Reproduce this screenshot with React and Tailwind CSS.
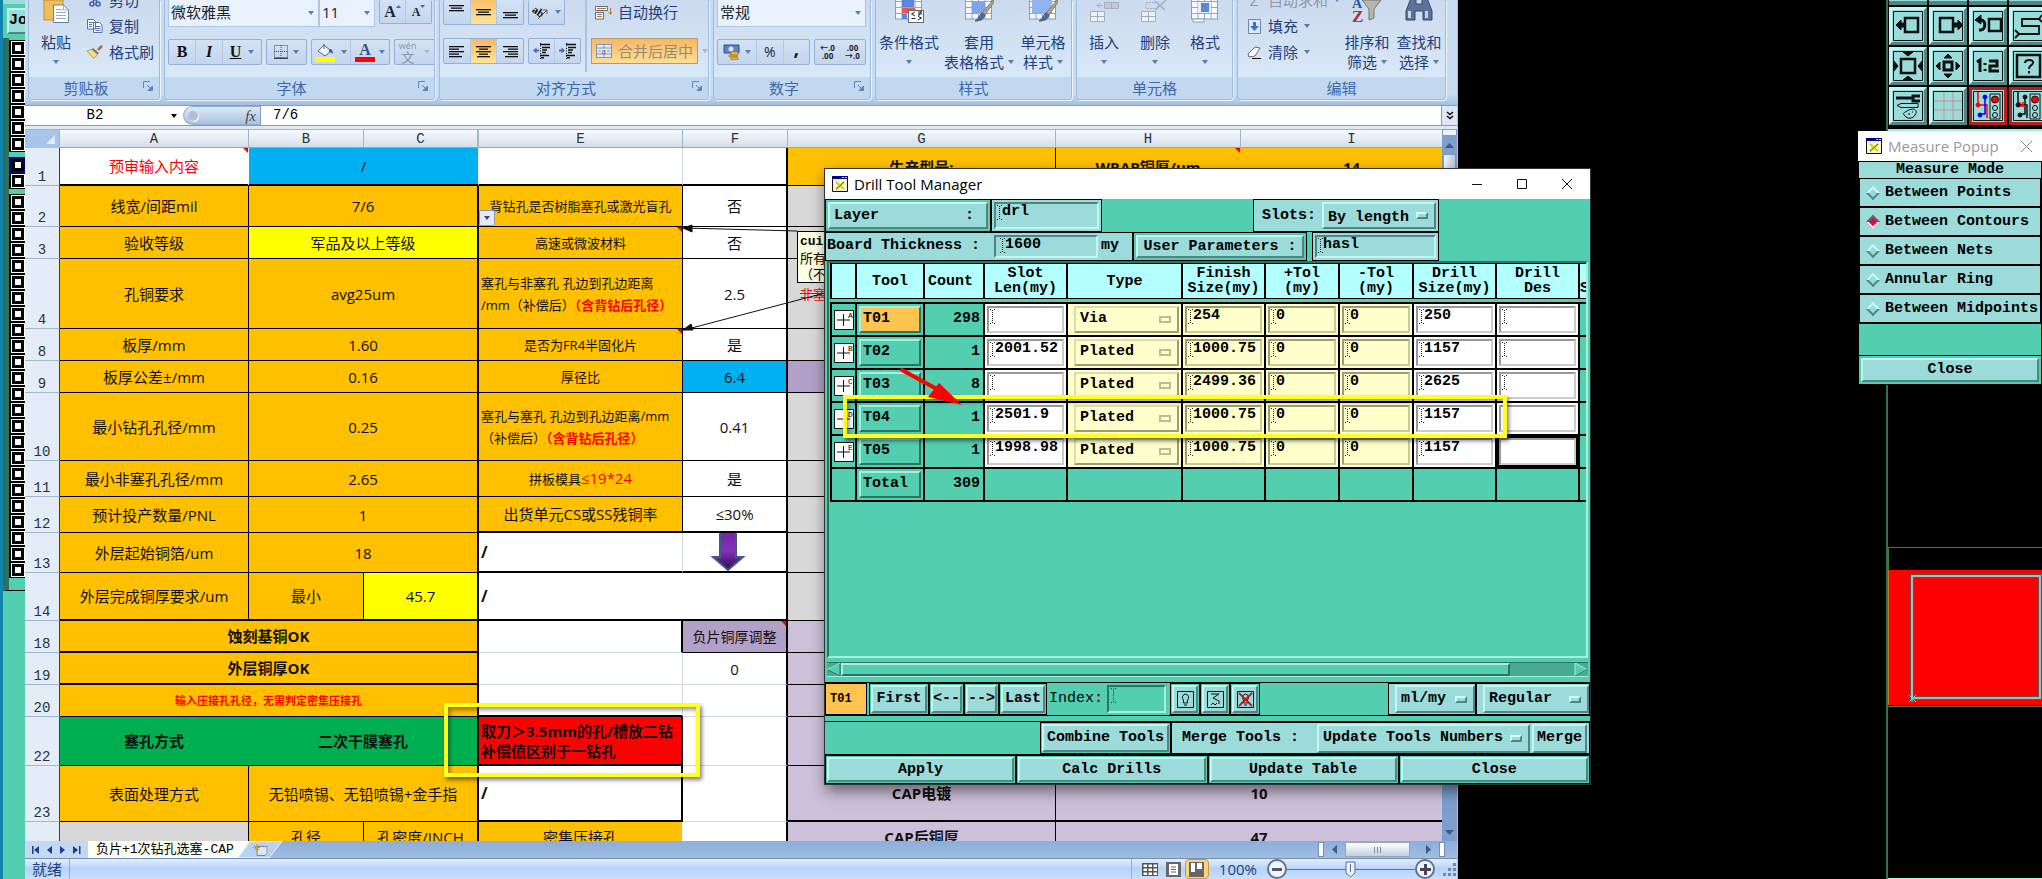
import React, { useState } from "react";

const UI_FONT = "font-['Open_Sans','Noto_Sans_CJK_SC',sans-serif]";
const MONO_FONT = "font-['Liberation_Mono','Noto_Sans_CJK_SC',monospace]";

const raised = "border-2 border-t-[#c4f7f1] border-l-[#c4f7f1] border-r-[#4f8584] border-b-[#4f8584] bg-[#9bdbda]";
const raisedGreen = "border-2 border-t-[#a5efdc] border-l-[#a5efdc] border-r-[#2d7462] border-b-[#2d7462]";
const sunken = "border-2 border-t-[#4f8584] border-l-[#4f8584] border-r-[#c4f7f1] border-b-[#c4f7f1] bg-[#9bdbda]";

/* ---------- spreadsheet ribbon ---------- */

function Caret({ className = "text-[#5b7cae]" }) {
  return (
    <svg width="6" height="4" viewBox="0 0 6 4" className={className} aria-hidden="true">
      <path d="M0 0h6L3 4z" fill="currentColor" />
    </svg>
  );
}

function Group({ title, width, launcher, children }) {
  return (
    <section className={`flex h-[100px] flex-none flex-col overflow-hidden rounded-b border border-t-0 border-[#9dbbdd] shadow-[1px_1px_0_#eef6fd] ${width}`}>
      <div className="flex h-[77px] flex-none overflow-hidden bg-linear-to-b from-[#cbdaee] to-[#d9e8f6]">{children}</div>
      <div className="flex h-[23px] items-center bg-[#c1d8f0] text-[15px] text-[#3c68a8]">
        <span className="flex-1 text-center">{title}</span>
        {launcher && (
          <button aria-label={title} className="mr-1.5 mb-1">
            <svg width="10" height="10" viewBox="0 0 10 10" fill="none" stroke="#6484b4">
              <path d="M.5 7V.5H7M4 4l4 4" />
              <path d="M9.500 5v4.500H5z" fill="#6484b4" />
            </svg>
          </button>
        )}
      </div>
    </section>
  );
}

const box = "flex items-center rounded-[2px] border border-[#92b0d8] bg-linear-to-b from-[#d3e2f4] to-[#c3d6ee]";
const seg = "flex h-full items-center justify-center border-r border-[#b3c8e4] last:border-r-0";

function Combo({ value, width, label }) {
  return (
    <div className={`relative h-[27px] border border-t-0 border-[#abc6e8] bg-[#e9f2fc] ${width}`}>
      <select aria-label={label} className="h-full w-full appearance-none bg-transparent pr-4 pb-1 pl-0.5 text-[15px] text-[#1b2230] outline-none">
        <option>{value}</option>
      </select>
      <span className="pointer-events-none absolute top-[11px] right-1 flex"><Caret /></span>
    </div>
  );
}

function Lines({ rows, top = 0 }) {
  return (
    <svg width="15" height="17" viewBox="0 0 15 17" aria-hidden="true">
      {rows.map(([x, w], i) => (
        <rect key={i} x={x} y={top + i * 2.500} width={w} height="1.300" fill="#111" />
      ))}
    </svg>
  );
}

function IndentIcon({ flip }) {
  return (
    <svg width="17" height="16" viewBox="0 0 17 16" aria-hidden="true">
      <path d="M7 1.500h10M9 4.500h8M9 7h5M9 9.500h4M7 12.500h9M8 14.800h3" stroke="#111" strokeWidth="1.400" />
      <path d="M7.500 0v16" stroke="#111" strokeDasharray="1 1.500" />
      <path d={flip ? "M6 7.500L2.500 4.500v2H0v2h2.500v2z" : "M0 7.500L3.500 4.500v2H6v2H3.500v2z"} fill="#3f6cc4" />
    </svg>
  );
}

function BigButton({ icon, lines, width }) {
  return (
    <button className={`flex flex-none flex-col items-center text-[15px] leading-5 whitespace-nowrap text-[#1e3f80] ${width}`}>
      <span className="flex h-6 flex-none items-start justify-center">{icon}</span>
      <span className="mt-2">{lines[0]}</span>
      <span className="flex h-5 items-center gap-1">
        {lines[1]}
        <Caret />
      </span>
    </button>
  );
}

function SmallButton({ icon, text, muted, caret }) {
  return (
    <button className={`flex h-[26px] flex-none items-center gap-1.5 text-[15px] whitespace-nowrap ${muted ? "text-[#8f99a8]" : "text-[#1e3f80]"}`}>
      <span className="flex w-4 justify-center">{icon}</span>
      {text}
      {caret && <Caret />}
    </button>
  );
}

function GridIcon({ kind }) {
  return (
    <svg width="30" height="24" viewBox="0 0 30 24" aria-hidden="true">
      <rect x="1.500" y="-6" width="26" height="25" fill="#f6f9fd" stroke="#8a9cb8" />
      <path d="M1 1.500h26M1 7.500h26M1 13.500h26M8 0v19M14.500 0v19M21 0v19" stroke="#8fa6cc" />
      {kind === "cond" && (
        <>
          <path d="M8 -2h12v9H8z" fill="#5b86dc" />
          <path d="M8 8h13v5H8z" fill="#ee5544" />
          <path d="M8 14h5v5H8z" fill="#5b86dc" />
          <rect x="14.500" y="10.500" width="15" height="12" fill="#fff" stroke="#666" />
          <path d="M21 12l-3.500 2 3.500 2M17.500 18.500h4M24 12h4M24 14h4M27.500 11l-3 5M24 16.500l3.500 1.500-3.500 2" fill="none" stroke="#222" />
        </>
      )}
      {kind === "table" && <path d="M8 2h13v11H8z" fill="#7fa3e6" />}
      {kind === "style" && <path d="M4 -3h20v16H4z" fill="#8fb2f0" />}
      {kind === "format" && (
        <>
          <path d="M8 2h13v11H8z" fill="#e4ecf8" />
          <path d="M11 3h8v9h-8z" fill="#5d86da" />
          <path d="M3 19h11v3H3z" fill="#fff" stroke="#8a9cb8" />
        </>
      )}
      {(kind === "table" || kind === "style") && (
        <>
          <path d="M29 0l1 2-9 13-3-2z" fill="#b3a48e" stroke="#6f6454" strokeWidth=".7" />
          <path d="M18 13l3 2c-1 4-4 6-10 6 4-2 4-6 7-8z" fill="#3b6db8" stroke="#6b4528" strokeWidth=".8" />
        </>
      )}
    </svg>
  );
}

function InsertIcon({ remove }) {
  return (
    <svg width="30" height="24" viewBox="0 0 30 24" fill="#eef2f8" stroke="#a3aebf" aria-hidden="true">
      <path d="M1.500 11.500h14v10h-14zM1.500 16.500h14M8.500 11.500v10" />
      {remove ? (
        <>
          <path d="M6 2.500h12v6H6z" strokeDasharray="2 1" fill="none" />
          <path d="M15 1l10 9M26 0L15 10" strokeWidth="1.500" />
        </>
      ) : (
        <path d="M15.500 2.500h14v6h-14zM22.500 2.500v6M14 5.500H8M10.500 3L8 5.500 10.500 8" fill="#c2cad6" />
      )}
    </svg>
  );
}

function Ribbon() {
  return (
    <div className="flex h-[106px] flex-none gap-1 border-b border-[#7d9cc6] bg-linear-to-b from-[#c7dbf3] from-90% to-[#a3bfe2] pr-3 pl-[3px]">
      <Group title="剪贴板" launcher width="w-[132px]">
        <button className="flex w-[54px] flex-none flex-col items-center text-[15px] leading-5 text-[#1e3f80]">
          <svg width="28" height="24" viewBox="0 0 28 24" aria-hidden="true">
            <path d="M2 0h19v20H2z" fill="#f0bd5e" stroke="#c48f35" />
            <path d="M11.500 5h10l5 5v12.500h-15z" fill="#fff" stroke="#6b7f9e" />
            <path d="M21.500 5v5h5M14 9.500h6M14 12.500h10M14 15.500h10M14 18.500h10" fill="none" stroke="#9aa9c0" />
          </svg>
          <span className="mt-2">粘贴</span>
          <span className="flex h-5 items-center"><Caret /></span>
        </button>
        <div className="ml-1 flex h-[65px] flex-col justify-end">
          <SmallButton
            text="剪切"
            icon={
              <svg width="12" height="14" viewBox="0 0 12 14" fill="none" stroke="#3c64a8" strokeWidth="1.600">
                <path d="M3 0l5 9M8 0L4 9" />
                <circle cx="3" cy="11" r="2" />
                <circle cx="9" cy="11" r="2" />
              </svg>
            }
          />
          <SmallButton
            text="复制"
            icon={
              <svg width="16" height="14" viewBox="0 0 16 14" fill="#fff" stroke="#5473ac">
                <path d="M.5.500h6l2 2V10h-8zM6.500 3.500h6l2.500 2.500v7.500H6.500z" />
                <path d="M2 3.500h4M2 5.500h3M2 7.500h3M8.500 7.500h5M8.500 9.500h5M8.500 11.500h5" />
              </svg>
            }
          />
          <SmallButton
            text="格式刷"
            icon={
              <svg width="16" height="14" viewBox="0 0 16 14">
                <path d="M10 4l4-4 2 1.500-4 4.500z" fill="#a67542" />
                <path d="M6 3l6 5-1.500 1.500-6-5z" fill="#6b7484" />
                <path d="M4.500 4.500l6 5L7 13.500 0 6z" fill="#f4dd8a" stroke="#a98d3a" strokeWidth=".8" />
              </svg>
            }
          />
        </div>
      </Group>

      <Group title="字体" launcher width="w-[271px]">
        <div className="ml-[3px] flex flex-col">
          <div className="flex">
            <Combo label="字体" value="微软雅黑" width="w-[151px]" />
            <Combo label="字号" value="11" width="w-[56px]" />
            <div className={`ml-1 h-6 w-[53px] border-t-0 ${box} font-['Liberation_Serif',serif] font-bold text-[#1d2735]`}>
              <button aria-label="增大字号" className={`${seg} flex-1 text-base leading-5`}>A<span className="mb-2.5"><svg width="5" height="3"><path d="M0 3h5L2.500 0z" fill="#3f6cc4" /></svg></span></button>
              <button aria-label="减小字号" className={`${seg} flex-1 text-xs leading-5`}>A<span className="mb-2.5"><svg width="5" height="3"><path d="M0 0h5L2.500 3z" fill="#3f6cc4" /></svg></span></button>
            </div>
          </div>
          <div className="mt-3 flex h-[26px] gap-1">
            <div className={`w-[94px] ${box} font-['Liberation_Serif',serif] text-base font-bold text-[#111]`}>
              <button className={`${seg} w-[27px]`}>B</button>
              <button className={`${seg} w-[27px] italic`}>I</button>
              <button className={`${seg} w-[25px] border-r-0 underline`}>U</button>
              <Caret />
            </div>
            <div className={`w-[41px] justify-around px-1 ${box}`}>
              <button aria-label="边框">
                <svg width="14" height="14" viewBox="0 0 14 14" stroke="#445" fill="none">
                  <path d="M.5.500h13v12H.5zM7 0v13M0 6.500h14" strokeDasharray="1 1" />
                  <path d="M0 13.500h14" strokeWidth="1.500" />
                </svg>
              </button>
              <Caret />
            </div>
            <div className={`w-[79px] ${box}`}>
              <button aria-label="填充颜色" className={`${seg} flex-1 gap-1.5`}>
                <svg width="20" height="19" viewBox="0 0 20 19">
                  <path d="M9 2l7 6-6 5-7-5z" fill="#f2f5fa" stroke="#55637c" />
                  <path d="M9 6V1" stroke="#55637c" />
                  <path d="M14 6c3 0 4 2 4 5-1-1-2-2-4-2z" fill="#3159a8" />
                  <rect y="14" width="20" height="5" fill="#ff0" />
                </svg>
                <Caret />
              </button>
              <button aria-label="字体颜色" className={`${seg} flex-1 gap-1`}>
                <span className="w-5 border-b-[5px] border-[#f00] font-['Liberation_Serif',serif] text-base leading-[15px] font-bold text-[#33508a]">A</span>
                <Caret />
              </button>
            </div>
            <div className={`w-[41px] justify-around ${box}`}>
              <button className="flex flex-col items-center text-[9px] leading-[9px] text-[#8b95a5]">
                <span>wén</span>
                <span className="text-[13px] leading-[14px]">文</span>
              </button>
              <Caret className="text-[#a9b6ca]" />
            </div>
          </div>
        </div>
      </Group>

      <Group title="对齐方式" launcher width="w-[270px]">
        <div className="ml-[3px] flex flex-col">
          <div className="flex h-[25px] gap-1">
            <div className={`w-[81px] border-t-0 ${box}`}>
              <button aria-label="顶端对齐" className={`${seg} flex-1`}><Lines top={1} rows={[[0, 15], [2, 11], [0, 15]]} /></button>
              <button aria-label="垂直居中" className={`${seg} flex-1 bg-linear-to-b from-[#fbc06c] to-[#fee595]`}><Lines top={5} rows={[[0, 15], [2, 11], [0, 15]]} /></button>
              <button aria-label="底端对齐" className={`${seg} flex-1`}><Lines top={8} rows={[[0, 15], [2, 11], [0, 15]]} /></button>
            </div>
            <div className={`w-[37px] justify-around border-t-0 ${box}`}>
              <button aria-label="方向">
                <svg width="17" height="16" viewBox="0 0 17 16">
                  <text x="0" y="10" transform="rotate(35 4 8)" fontSize="11" fontWeight="bold" fontFamily="Liberation Serif">ab</text>
                  <path d="M6 15l9-9M11 6h4v4" fill="none" stroke="#555" />
                </svg>
              </button>
              <Caret />
            </div>
          </div>
          <div className="mt-[13px] flex h-[26px] gap-1">
            <div className={`w-[81px] ${box}`}>
              <button aria-label="左对齐" className={`${seg} flex-1`}><Lines top={3} rows={[[0, 15], [0, 10], [0, 15], [0, 10], [0, 13]]} /></button>
              <button aria-label="居中" className={`${seg} flex-1 bg-linear-to-b from-[#fbb85e] to-[#fee595]`}><Lines top={3} rows={[[0, 15], [3, 9], [0, 15], [3, 9], [1, 13]]} /></button>
              <button aria-label="右对齐" className={`${seg} flex-1`}><Lines top={3} rows={[[0, 15], [5, 10], [0, 15], [5, 10], [2, 13]]} /></button>
            </div>
            <div className={`w-[53px] ${box}`}>
              <button aria-label="减少缩进" className={`${seg} flex-1`}><IndentIcon /></button>
              <button aria-label="增加缩进" className={`${seg} flex-1`}><IndentIcon flip /></button>
            </div>
          </div>
        </div>
        <div className="mx-1 h-[72px] w-0.5 flex-none bg-[#a9c2e2]" />
        <div className="flex flex-col text-[15px] whitespace-nowrap">
          <button className="flex h-[25px] items-center gap-1.5 px-1 text-[#1e3f80]">
            <svg width="17" height="16" viewBox="0 0 17 16" fill="#fff" stroke="#667">
              <path d="M.5 1.500h12v4H.5zM.5 7.500h8v6.500H.5z" />
              <path d="M2 3.500h9M2 9.500h5M2 11.500h5M15.500 3v6M13 6.500l2.500 3 1.500-3" stroke="#b0763a" />
            </svg>
            自动换行
          </button>
          <div className="mt-[13px] flex items-center gap-1">
            <button className="flex h-[26px] items-center gap-1.5 border border-[#b39a6b] bg-linear-to-b from-[#f7b767] to-[#fddf93] px-1 text-[#9a8a70]">
              <svg width="16" height="14" viewBox="0 0 16 14" fill="#e3ebf6" stroke="#8194b4">
                <path d="M.5.500h15v13H.5zM.5 4h15M.5 10h15M8 .500V4M8 10v3.500M2 7h3M11 7h3" />
                <text x="5.500" y="9.500" fontSize="8" stroke="none" fill="#456">a</text>
              </svg>
              合并后居中
            </button>
            <Caret className="text-[#a9b6ca]" />
          </div>
        </div>
      </Group>

      <Group title="数字" launcher width="w-[158px]">
        <div className="ml-[3px] flex flex-col">
          <Combo label="数字格式" value="常规" width="w-[149px]" />
          <div className="mt-3 flex h-[26px] gap-1 font-bold text-[#222]">
            <div className={`w-[93px] ${box}`}>
              <button aria-label="货币" className={`${seg} w-[39px] gap-1`}>
                <svg width="18" height="16" viewBox="0 0 18 16">
                  <path d="M1 1h15v8H1z" fill="#5f82c4" stroke="#2f4f92" />
                  <circle cx="8" cy="5" r="2.500" fill="#dbe6f6" />
                  <path d="M8 8h7v3H8zM6 11h8v2H6zM8 13h7v2.500H8z" fill="#f0c040" stroke="#a07818" strokeWidth=".7" />
                </svg>
                <Caret />
              </button>
              <button className={`${seg} flex-1 text-sm font-normal`}>%</button>
              <button className={`${seg} flex-1 pb-2 text-xl`}>,</button>
            </div>
            <div className={`w-[52px] text-[8px] leading-[8px] ${box}`}>
              <button className="flex-1">←.0<br />.00</button>
              <button className="flex-1">.00<br />→.0</button>
            </div>
          </div>
        </div>
      </Group>

      <Group title="样式" width="w-[197px]">
        <BigButton width="w-[66px]" lines={["条件格式", ""]} icon={<GridIcon kind="cond" />} />
        <BigButton width="w-[74px]" lines={["套用", "表格格式"]} icon={<GridIcon kind="table" />} />
        <BigButton width="w-[54px]" lines={["单元格", "样式"]} icon={<GridIcon kind="style" />} />
      </Group>

      <Group title="单元格" width="w-[157px]">
        <BigButton width="w-[54px]" lines={["插入", ""]} icon={<InsertIcon />} />
        <BigButton width="w-[48px]" lines={["删除", ""]} icon={<InsertIcon remove />} />
        <BigButton width="w-[52px]" lines={["格式", ""]} icon={<GridIcon kind="format" />} />
      </Group>

      <Group title="编辑" width="w-[209px]">
        <div className="ml-2 flex h-[65px] w-[94px] flex-none flex-col items-start justify-end">
          <SmallButton muted caret text="自动求和" icon="Σ" />
          <SmallButton
            caret
            text="填充"
            icon={
              <svg width="13" height="15" viewBox="0 0 13 15">
                <path d="M.5.500h12v14H.5z" fill="#dfe9f8" stroke="#6b87b8" />
                <path d="M5 3h3v4h3l-4.500 5L2 7h3z" fill="#3d6fd0" />
              </svg>
            }
          />
          <SmallButton
            caret
            text="清除"
            icon={
              <svg width="15" height="13" viewBox="0 0 15 13">
                <path d="M8 1l5 1-5 8-6 1-1-3z" fill="#fff" stroke="#667" />
                <path d="M5 12.500h9" stroke="#111" />
              </svg>
            }
          />
        </div>
        <BigButton
          width="w-[54px]"
          lines={["排序和", "筛选"]}
          icon={
            <svg width="30" height="24" viewBox="0 0 30 24" fontFamily="Liberation Serif" fontWeight="bold">
              <text x="0" y="8" fontSize="14" fill="#2d58a8">A</text>
              <text x="0" y="22" fontSize="17" fill="#a8323a">Z</text>
              <path d="M10 0h19l-7 9v9l-5 2V9z" fill="#b5b5b2" stroke="#77746c" />
            </svg>
          }
        />
        <BigButton
          width="w-[50px]"
          lines={["查找和", "选择"]}
          icon={
            <svg width="28" height="24" viewBox="0 0 28 24" fill="#5c7299" stroke="#35496e">
              <path d="M6 -2h5v6h6v-6h5l5 13v9h-9v-9h-8v9H1v-9z" />
              <path d="M4.500 11v7M21.500 11v7" stroke="#c5d3ea" strokeWidth="3" />
            </svg>
          }
        />
      </Group>
    </div>
  );
}

function FormulaBar() {
  return (
    <div className={`flex h-5 flex-none border-b border-[#7d9cc6] bg-white text-[14px] text-black ${MONO_FONT}`}>
      <input aria-label="名称框" defaultValue="B2" className="w-[140px] text-center outline-none" />
      <button aria-label="名称列表" className="flex w-[18px] items-center justify-center"><Caret className="text-black" /></button>
      <div className="flex w-[77px] items-center justify-between rounded-l-full border border-r-0 border-[#94aed0] bg-linear-to-b from-[#dce8f8] to-[#a9c2e4] pr-1 pl-1">
        <span className="size-2.5 rounded-full bg-[#b3bfd3] shadow-[1px_1px_0_#fff]" />
        <span className="font-['Liberation_Serif',serif] text-[15px] leading-4 text-[#444] italic">fx</span>
      </div>
      <input aria-label="编辑栏" defaultValue="7/6" className="min-w-0 flex-1 border-l border-[#7d9cc6] pl-3 outline-none" />
      <button aria-label="展开编辑栏" className="flex w-4 items-center justify-center border-l border-[#7d9cc6] bg-[#dce8f8]">
        <svg width="8" height="9" viewBox="0 0 8 9" fill="none" stroke="#111" strokeWidth="1.500"><path d="M1 1l3 2.500L7 1M1 5l3 2.500L7 5" /></svg>
      </button>
    </div>
  );
}

/* ---------- sheet ---------- */

const RED = <b className="text-[#f00]">（含背钻后孔径）</b>;
const or = "bg-[#ffc000] border-black";
const wh = "bg-white border-black";
const grid = "bg-white border-[#d0d7e5]";
const gr = "bg-[#d8d8d8] border-black";
const pu = "bg-[#ccc0da] border-black";
const slash = <b className="text-base">/</b>;

const SHEET = [
  { n: 1, h: "h-[38px]", cells: [
    { t: "预审输入内容", c: "bg-white border-r-white border-b-2 border-b-black text-[#f00]", note: true },
    { t: "/", span: 2, c: "bg-[#00b0f0] border-r-white border-b-2 border-b-black" },
    { t: "", c: "bg-white border-b-2 border-b-black border-r-[#d0d7e5]" },
    { t: "", c: "bg-white border-b-2 border-r-2 border-black" },
    { t: "生产型号:", c: `${or} font-bold` },
    { t: "WRAP铜厚/um", c: "bg-[#ffc000] border-b-black border-r-[#ffc000] font-bold", note: true },
    { t: "14", c: `${or} font-bold` },
  ] },
  { n: 2, h: "h-[41px]", cells: [
    { t: "线宽/间距mil", c: or }, { t: "7/6", span: 2, c: `${or} border-r-2` },
    { t: "背钻孔是否树脂塞孔或激光盲孔", c: `${or} text-[13px]`, menu: true },
    { t: "否", c: `${wh} border-r-2` }, { t: "", span: 3, c: gr },
  ] },
  { n: 3, h: "h-[32px]", cells: [
    { t: "验收等级", c: or }, { t: "军品及以上等级", span: 2, c: "bg-[#ff0] border-black border-r-2" },
    { t: "高速或微波材料", c: `${or} text-[13px]`, note: true },
    { t: "否", c: `${wh} border-r-2` }, { t: "", span: 3, c: gr },
  ] },
  { n: 4, h: "h-[70px]", cells: [
    { t: "孔铜要求", c: or }, { t: "avg25um", span: 2, c: `${or} border-r-2` },
    { t: <>塞孔与非塞孔 孔边到孔边距离<br />/mm（补偿后）{RED}</>, c: `${or} pl-0.5 text-left text-[13px] leading-[22px]` },
    { t: "2.5", c: `${wh} border-r-2` }, { t: "", span: 3, c: gr },
  ] },
  { n: 8, h: "h-[32px]", cells: [
    { t: "板厚/mm", c: or }, { t: "1.60", span: 2, c: `${or} border-r-2` },
    { t: "是否为FR4半固化片", c: `${or} text-[13px]`, note: true },
    { t: "是", c: `${wh} border-r-2` }, { t: "", span: 3, c: gr },
  ] },
  { n: 9, h: "h-[32px]", cells: [
    { t: "板厚公差±/mm", c: or }, { t: "0.16", span: 2, c: `${or} border-r-2` },
    { t: "厚径比", c: `${or} text-[13px]` },
    { t: "6.4", c: "bg-[#00b0f0] border-black border-r-2" }, { t: "", span: 3, c: "bg-[#b1a0c7] border-black" },
  ] },
  { n: 10, h: "h-[68px]", cells: [
    { t: "最小钻孔孔径/mm", c: or }, { t: "0.25", span: 2, c: `${or} border-r-2` },
    { t: <>塞孔与塞孔 孔边到孔边距离/mm<br />（补偿后）{RED}</>, c: `${or} pl-0.5 text-left text-[13px] leading-[22px]` },
    { t: "0.41", c: `${wh} border-r-2` }, { t: "", span: 3, c: gr },
  ] },
  { n: 11, h: "h-[36px]", cells: [
    { t: "最小非塞孔孔径/mm", c: or }, { t: "2.65", span: 2, c: `${or} border-r-2` },
    { t: <><span className="text-[13px]">拼板模具</span><span className="text-[#f00]">≤19*24</span></>, c: or },
    { t: "是", c: `${wh} border-r-2` }, { t: "", span: 3, c: gr },
  ] },
  { n: 12, h: "h-[36px]", cells: [
    { t: "预计投产数量/PNL", c: or }, { t: "1", span: 2, c: `${or} border-r-2` },
    { t: "出货单元CS或SS残铜率", c: `${or} border-b-2` },
    { t: "≤30%", c: `${wh} border-r-2 border-b-2` }, { t: "", span: 3, c: gr },
  ] },
  { n: 13, h: "h-[40px]", cells: [
    { t: "外层起始铜箔/um", c: or }, { t: "18", span: 2, c: `${or} border-r-2` },
    { t: slash, c: "bg-white border-r-[#d0d7e5] border-b-2 border-b-black pl-0.5 text-left" },
    { t: <DownArrow />, c: `${wh} border-r-2 border-b-2` }, { t: "", span: 3, c: gr },
  ] },
  { n: 14, h: "h-[48px]", cells: [
    { t: "外层完成铜厚要求/um", c: `${or} border-b-2` }, { t: "最小", c: `${or} border-b-2` },
    { t: "45.7", c: "bg-[#ff0] border-black border-r-2 border-b-2" },
    { t: slash, span: 2, c: `${wh} border-r-2 border-b-2 pl-0.5 text-left` }, { t: "", span: 3, c: gr },
  ] },
  { n: 18, h: "h-[32px]", cells: [
    { t: "蚀刻基铜OK", span: 3, c: `${or} border-r-2 border-b-2 font-bold` },
    { t: "", c: "bg-white border-b-[#d0d7e5] border-r-2 border-r-black" },
    { t: "负片铜厚调整", c: "bg-[#b1a0c7] border-black border-r-2 text-[14px]", note: true }, { t: "", span: 3, c: pu },
  ] },
  { n: 19, h: "h-[32px]", cells: [
    { t: "外层铜厚OK", span: 3, c: `${or} border-r-2 border-b-2 font-bold` },
    { t: "", c: grid }, { t: "0", c: "bg-white border-b-[#d0d7e5] border-r-2 border-r-black" }, { t: "", span: 3, c: pu },
  ] },
  { n: 20, h: "h-[32px]", cells: [
    { t: "输入压接孔孔径，无需判定密集压接孔", span: 3, c: `${or} border-r-2 text-[11px] font-bold text-[#f00]` },
    { t: "", c: "bg-white border-r-[#d0d7e5] border-b-2 border-b-black" },
    { t: "", c: "bg-white border-b-[#d0d7e5] border-r-2 border-r-black" }, { t: "", span: 3, c: pu },
  ] },
  { n: 22, h: "h-[49px]", cells: [
    { t: "塞孔方式", c: "bg-[#00b050] border-b-black border-r-[#00b050] font-bold" },
    { t: "二次干膜塞孔", span: 2, c: "bg-[#00b050] border-black border-r-2 font-bold" },
    { t: <>取刀＞3.5mm的孔/槽放二钻<br />补偿值区别于一钻孔</>, c: "bg-[#f00] border-black border-r-2 border-b-2 pl-0.5 text-left font-bold whitespace-nowrap" },
    { t: "", c: "bg-white border-b-[#d0d7e5] border-r-2 border-r-black" }, { t: "", span: 3, c: pu },
  ] },
  { n: 23, h: "h-[56px]", cells: [
    { t: "表面处理方式", c: or }, { t: "无铅喷锡、无铅喷锡+金手指", span: 2, c: `${or} border-r-2` },
    { t: slash, c: `${wh} border-r-2 border-b-2 pl-0.5 text-left` },
    { t: "", c: "bg-white border-b-[#d0d7e5] border-r-2 border-r-black" },
    { t: "CAP电镀", c: `${pu} border-b-2 font-bold` }, { t: "10", span: 2, c: `${pu} border-b-2 font-bold` },
  ] },
  { n: "", h: "h-[30px]", cells: [
    { t: "", c: gr }, { t: "孔径", c: or }, { t: "孔密度/INCH", c: `${or} border-r-2` },
    { t: "密集压接孔", c: "bg-[#ffc000] border-r-white" },
    { t: "", c: "bg-white border-r-2 border-r-black" },
    { t: "CAP后铜厚", c: `${pu} font-bold` }, { t: "47", span: 2, c: `${pu} font-bold` },
  ] },
];

function DownArrow() {
  return (
    <svg width="50" height="38" viewBox="0 0 50 38" className="mx-auto" aria-label="下箭头">
      <defs>
        <linearGradient id="purple" x1="0" y1="0" x2="0" y2="1">
          <stop offset="0" stopColor="#7a22ad" />
          <stop offset=".5" stopColor="#7e35b4" />
          <stop offset="1" stopColor="#2d0a50" />
        </linearGradient>
      </defs>
      <path d="M10 -1h16v25h7L18 37 3 24h7z" fill="url(#purple)" stroke="#40588c" strokeWidth="2" />
    </svg>
  );
}

function Sheet() {
  return (
    <div className="flex min-h-0 flex-1 bg-[#dfe8f5] pt-[3px]">
      <div className="min-w-0 flex-1 overflow-hidden border-t border-[#9eb6ce]">
        <table className="w-[1438px] table-fixed border-separate border-spacing-0 text-center text-[15px] leading-5 text-[#111]">
          <colgroup>
            <col className="w-[35px]" />
            <col className="w-[189px]" />
            <col className="w-[115px]" />
            <col className="w-[115px]" />
            <col className="w-[204px]" />
            <col className="w-[105px]" />
            <col className="w-[268px]" />
            <col className="w-[185px]" />
            <col className="w-[222px]" />
          </colgroup>
          <thead className={`text-[14px] text-[#27323f] ${MONO_FONT}`}>
            <tr className="h-[18px] leading-4">
              <th className="border-r border-[#9eb6ce] bg-[#a9c4e9] p-0" aria-label="全选">
                <svg width="9" height="9" className="mr-1 ml-auto"><path d="M9 0v9H0z" fill="#e2ebf8" /></svg>
              </th>
              {["A", "B", "C", "E", "F", "G", "H", "I"].map((col) => (
                <th key={col} className={`border-b border-[#8d9ff0] bg-linear-to-b from-[#f8fafd] to-[#d5deea] p-0 font-normal ${col === "C" ? "border-r-2 border-r-[#9eb6ce]" : "border-r border-r-[#9eb6ce]"}`}>
                  {col}
                </th>
              ))}
            </tr>
          </thead>
          <tbody>
            {SHEET.map((row, i) => (
              <tr key={i} className={row.h}>
                <th scope="row" className={`border-r border-b border-r-[#2030c0] border-b-[#9eb6ce] bg-[#e4ecf7] p-0 align-bottom text-[14px] leading-4 font-normal text-[#27323f] ${MONO_FONT}`}>
                  {row.n}
                </th>
                {row.cells.map((cell, j) => (
                  <td key={j} colSpan={cell.span} className={`relative border-r border-b p-0 ${cell.c}`}>
                    {cell.t}
                    {cell.note && <span className="absolute top-0 right-0 border-t-[5px] border-l-[5px] border-t-[#e00] border-l-transparent" />}
                    {cell.menu && (
                      <button aria-label="下拉" className="absolute bottom-0 left-0 flex size-4 items-center justify-center rounded-[2px] border border-[#8c9cb8] bg-[#e3e8f2]">
                        <Caret className="text-[#3a4c78]" />
                      </button>
                    )}
                  </td>
                ))}
              </tr>
            ))}
          </tbody>
        </table>
      </div>
      <div className="flex w-[15px] flex-none flex-col items-center bg-[#7d9fcd]">
        <div className="h-[7px] w-full border border-[#7d9cc6] bg-[#eaf2fb]" />
        <button aria-label="向上滚动" className="flex h-[18px] items-center"><svg width="9" height="5"><path d="M0 5h9L4.500 0z" fill="#3f5a86" /></svg></button>
        <div className="h-60 w-[13px] rounded-[2px] border border-[#7d9cc6] bg-linear-to-r from-[#f4f7fb] to-[#b9c6d8]" />
        <button aria-label="向下滚动" className="mt-auto flex h-[18px] items-center"><svg width="9" height="5"><path d="M0 0h9L4.500 5z" fill="#3f5a86" /></svg></button>
      </div>
    </div>
  );
}

function SheetTabs() {
  return (
    <div className="flex h-[17px] flex-none items-center bg-linear-to-b from-[#8caeda] to-[#a3bde0] pr-3">
      <div className="flex h-full w-[63px] items-center justify-around bg-[#c4d8f1] px-1 text-[#1c3f88]">
        <button aria-label="第一张"><svg width="8" height="8" fill="currentColor"><path d="M0 0h1.500v8H0zM7 0v8L2 4z" /></svg></button>
        <button aria-label="上一张"><svg width="8" height="8" fill="currentColor"><path d="M6 0v8L1 4z" /></svg></button>
        <button aria-label="下一张"><svg width="8" height="8" fill="currentColor"><path d="M1 0v8l5-4z" /></svg></button>
        <button aria-label="最后一张"><svg width="8" height="8" fill="currentColor"><path d="M0 0v8l5-4zM6 0h1.500v8H6z" /></svg></button>
      </div>
      <button className={`h-full bg-[#fbfdf4] pr-4 pl-2 text-[13px] leading-4 text-black [clip-path:polygon(0_0,100%_0,93%_100%,0_100%)] ${MONO_FONT}`}>
        负片+1次钻孔选塞-CAP
      </button>
      <button aria-label="插入工作表" className="-ml-1.5 flex h-full w-8 -skew-x-[38deg] items-center justify-center border border-[#e8f0fa] bg-[#b9d0ee]">
        <svg width="15" height="12" viewBox="0 0 15 12" className="skew-x-[38deg]">
          <path d="M4.500 2.500h10v7l-2 2h-8z" fill="#dde6f2" stroke="#7388a8" />
          <path d="M4 0v7M.5 3.500h7M1.500 1l5 5M6.500 1l-5 5" stroke="#e0912c" />
        </svg>
      </button>
      <div className="ml-auto flex h-[15px] items-center gap-2">
        <span className="h-full w-1.5 border border-[#6f8fba] bg-white" />
        <button aria-label="向左滚动"><svg width="5" height="9"><path d="M5 0v9L0 4.500z" fill="#3f5a86" /></svg></button>
        <span className="flex h-full w-[65px] items-center justify-center gap-0.5 border border-[#8fa5c4] bg-linear-to-b from-white to-[#c3d0e2]">
          <i className="h-1.5 w-px bg-[#7d8da6]" />
          <i className="h-1.5 w-px bg-[#7d8da6]" />
          <i className="h-1.5 w-px bg-[#7d8da6]" />
        </span>
        <button aria-label="向右滚动" className="ml-2"><svg width="5" height="9"><path d="M0 0v9l5-4.500z" fill="#3f5a86" /></svg></button>
        <span className="h-full w-1.5 border border-[#6f8fba] bg-white" />
      </div>
    </div>
  );
}

function StatusBar() {
  return (
    <div className="flex h-[21px] flex-none items-center border-t border-[#6f8fba] bg-linear-to-b from-[#e3effd] via-[#b5d2f7] to-[#cbe0fa] text-[15px] text-[#1e3f80]">
      <span className="border-r border-[#8fb0dc] px-[7px] leading-5">就绪</span>
      <div className="ml-auto flex h-full items-center border-l border-[#8fb0dc] pl-1.5">
        <button aria-label="普通" className="flex h-full w-6 items-center justify-center">
          <svg width="16" height="13"><path d="M0 0h16v13H0z" fill="#555" /><path d="M1.500 1.500h3.500v2.500H1.500zM6.500 1.500H10v2.500H6.500zM11.500 1.500H15v2.500h-3.500zM1.500 5.500h3.500v2.500H1.500zM6.500 5.500H10v2.500H6.500zM11.500 5.500H15v2.500h-3.500zM1.500 9.500h3.500V12H1.500zM6.500 9.500H10V12H6.500zM11.500 9.500H15V12h-3.500z" fill="#fff" /></svg>
        </button>
        <button aria-label="页面布局" className="flex h-full w-[23px] items-center justify-center">
          <svg width="15" height="15"><path d="M0 0h15v15H0z" fill="#666" /><path d="M3 2h9v11H3z" fill="#fff" /><path d="M5 5h5M5 7.500h5M5 10h5" stroke="#666" /></svg>
        </button>
        <button aria-label="分页预览" className="flex h-full w-6 items-center justify-center rounded border border-[#c49a4a] bg-[#fbd27e]">
          <svg width="15" height="15"><path d="M0 0h15v15H0z" fill="#666" /><path d="M2 1h4v9H2zM8 1h5v6H8z" fill="#fff" /></svg>
        </button>
        <span className="mx-2.5">100%</span>
        <button aria-label="缩小" className="flex size-5 flex-none items-center justify-center rounded-full border-2 border-[#66738a] bg-[#eef4fb]"><span className="h-[3px] w-2.5 bg-[#556]" /></button>
        <div className="relative flex h-full w-32 items-center">
          <span className="h-px w-full bg-[#5a76a6]" />
          <svg width="11" height="17" viewBox="0 0 11 17" className="absolute left-[58px]"><path d="M1 1h9v11l-4.500 4L1 12z" fill="#e9f0f9" stroke="#5a6f94" /><path d="M5.500 3v8" stroke="#5a6f94" /></svg>
        </div>
        <button aria-label="放大" className="flex size-5 flex-none items-center justify-center rounded-full border-2 border-[#66738a] bg-[#eef4fb]">
          <svg width="11" height="11"><path d="M5.500 0v11M0 5.500h11" stroke="#445" strokeWidth="3" /></svg>
        </button>
        <svg width="16" height="16" className="ml-1.5" fill="#6f86ad"><path d="M12 2h3v3h-3zM12 7h3v3h-3zM7 7h3v3H7zM12 12h3v3h-3zM7 12h3v3H7zM2 12h3v3H2z" /></svg>
      </div>
    </div>
  );
}

function Spreadsheet() {
  return (
    <main className={`flex min-w-0 flex-1 flex-col overflow-hidden border-r border-[#a9c4e9] bg-[#c7dbf3] ${UI_FONT}`}>
      <Ribbon />
      <FormulaBar />
      <Sheet />
      <SheetTabs />
      <StatusBar />
    </main>
  );
}

/* ---------- CAD pieces ---------- */

function LayerStrip() {
  const groups = [7, 2, 24];
  return (
    <aside className="flex w-[25px] flex-none overflow-hidden border-l-[3px] border-[#1184ae] bg-[#54ceb0]">
      <div className="flex w-full flex-col">
        <div className="h-1 flex-none bg-[#9bdbda]" />
        <button className={`mt-1 ml-1 h-[26px] w-10 flex-none text-left text-[15px] font-bold ${raised} ${MONO_FONT}`}>Job</button>
        <div className="mt-1 flex flex-col gap-[5px] border-b border-l-[6px] border-b-black border-l-[#2f6f60] pt-0.5 pb-3">
          {groups.map((count, g) => (
            <div key={g}>
              {Array.from({ length: count }, (_, i) => (
                <div key={i} className={`flex h-4 w-4 items-center justify-center border-y border-l-2 ${g === 1 && i === 0 ? "border-[#000080] bg-[#000080]" : "border-black bg-white"}`}>
                  <span className="size-3 border-[3px] border-black bg-white" />
                </div>
              ))}
            </div>
          ))}
        </div>
      </div>
    </aside>
  );
}

const CAD_ICONS = [
  <><path d="M12 7h13v14H12z" strokeWidth="2.500" /><path d="M3 14l5-5v3h4v4H8v3z" fill="#111" /></>,
  <><path d="M7 7h13v14H7z" strokeWidth="2.500" /><path d="M30 14l-5-5v3h-5v4h5v3z" fill="#111" /></>,
  <><path d="M16 8h12v12H16z" strokeWidth="2.500" /><path d="M5 9h3c5 0 5 9 0 10H6" strokeWidth="3" /><path d="M2 9l6-5v9z" fill="#111" /></>,
  <path d="M26 8H9v7h17v8H6M26 8l3-4M6 23l-4 4M2 19l4 4M26 8l3 3" strokeWidth="1.800" />,
  <><path d="M8 8h14v14H8z" strokeWidth="2.500" /><path d="M10 1h10l-5 4zM10 29h10l-5-4zM1 10v10l4-5zM29 10v10l-4-5z" fill="#111" /></>,
  <><path d="M11 11h8v8h-8z" strokeWidth="3" /><path d="M11 7h8l-4-4zM11 23h8l-4 4zM7 11v8l-4-4zM23 11v8l4-4z" fill="#111" /></>,
  <path d="M4 11l3-2v12M12 12v2M12 18v2M16 10h8v5h-7v5h9" strokeWidth="3" />,
  <><path d="M4 4h23v22H4z" strokeWidth="2.500" /><path d="M12 12c0-4 9-4 8 0-1 3-4 2-4 6M16 20v2.500" strokeWidth="2" /></>,
  <><path d="M3 7h16M27 5h-7v5h7" strokeWidth="3" /><path d="M4 14.500l4-2h17v4H8z" fill="#9bdbda" /><path d="M14 20c6-4 12-1 8 4-2 4-8 4-10 1s-3-2 2-5zM15 23h2M19 21h1" /></>,
  <path d="M11 1v28M20 1v28M1 10h28M1 19h28" stroke="#c98f8f" />,
];

function Signals({ mono }) {
  const blue = mono ? "#111" : "#00f";
  const red = mono ? "#111" : "#f00";
  return (
    <>
      <path d="M5 1v13h9v13" stroke={red} strokeWidth="1.500" />
      <path d="M12 6v17H7" stroke={blue} strokeWidth="1.500" />
      {mono && <path d="M7 11v4h6M10 11v4" stroke="#f00" strokeWidth="1.500" />}
      <circle cx="5" cy="14" r="2" fill={red} stroke={red} />
      <circle cx="12" cy="6" r="2" fill={blue} stroke={blue} />
      <circle cx="7" cy="24" r="2" fill={blue} stroke={blue} />
      <path d="M17 3h10v25H17z" />
      <circle cx="22" cy="8.500" r="3.500" fill="#f00" />
      <circle cx="22" cy="17" r="2.500" />
      <circle cx="22" cy="24" r="2.500" />
    </>
  );
}

function CadPanel() {
  const icons = [...CAD_ICONS, <Signals />, <Signals mono />];
  return (
    <aside className="flex w-[156px] flex-none flex-col overflow-hidden border-l-2 border-[#2f6f60] bg-black">
      <div className="grid grid-cols-[repeat(4,40px)] gap-y-0.5 border-b-2 border-[#a5efdc] pb-1 pl-px">
        {[0, 1, 2, 3].map((i) => (
          <div key={i} className="mr-0.5 h-[5px] border-b-4 border-[#4f8584] bg-[#9bdbda]" />
        ))}
        {icons.map((icon, i) => (
          <button key={i} aria-label={`工具 ${i + 1}`} className={`mr-0.5 flex h-[38px] items-center justify-center border-[3px] ${i > 9 ? "border-[#b22020] bg-[#9bdbda]" : "border-t-[#c4f7f1] border-r-[#4f8584] border-b-[#4f8584] border-l-[#c4f7f1] bg-[#9bdbda]"}`}>
            <svg width="30" height="30" viewBox="0 0 30 30" fill="none" stroke="#111">
              <path d="M.5.500h29v29H.5z" />
              {icon}
            </svg>
          </button>
        ))}
      </div>
      <svg className="min-h-0 w-full flex-1" fill="none" aria-label="board canvas">
        <path d="M.5 574V416.500H160" stroke="#4b7a2b" />
        <path d="M0 439h160v135H0z" fill="#f00" />
        <path d="M.5 439v135" stroke="#c07818" />
        <path d="M0 575.500h160" stroke="#6b7a20" />
        <path d="M24 445h128v122H24z" stroke="#555" strokeWidth="4" />
        <path d="M24 445h128v122H24z" stroke="#b4b4b4" strokeWidth="2" />
        <path d="M21 564l7 7M28 564l-7 7M24 563v8" stroke="#58e0e0" />
      </svg>
      <div className="h-px bg-[#a5efdc]" />
    </aside>
  );
}

function AppIcon() {
  return (
    <svg width="16" height="16" viewBox="0 0 16 16" className="flex-none" aria-hidden="true">
      <path d="M.5.500h15v15H.5z" fill="#f4f4e6" stroke="#111" />
      <path d="M0 0h16v3H0z" fill="#000080" />
      <path d="M10 1h2v1h-2zM13 1h2v1h-2z" fill="#ddd" />
      <path d="M4 6l8 7M12 6l-8 7" stroke="#d8d000" strokeWidth="2" />
      <path d="M4 13.500L12 6" stroke="#333" strokeWidth=".7" />
    </svg>
  );
}

const MODES = ["Between Points", "Between Contours", "Between Nets", "Annular Ring", "Between Midpoints"];

function MeasurePopup() {
  const [mode, setMode] = useState("Between Contours");
  return (
    <section className="absolute top-[131px] right-0 w-[184px] bg-black">
      <header className={`flex h-[30px] items-center gap-1.5 bg-white pl-2 text-[15px] whitespace-nowrap text-[#999] ${UI_FONT}`}>
        <AppIcon />
        <h2>Measure Popup</h2>
        <button aria-label="Close popup" className="mr-2.5 ml-auto">
          <svg width="11" height="11" stroke="#888"><path d="M0 0l11 11M11 0L0 11" /></svg>
        </button>
      </header>
      <fieldset className={`border border-black text-[15px] font-bold text-black ${MONO_FONT}`}>
        <div className="h-4 bg-[#9bdbda] text-center leading-4">Measure Mode</div>
        <div className="mt-px flex flex-col gap-0.5 bg-black px-px pb-0.5">
          {MODES.map((m) => (
            <label key={m} className="flex h-[27px] items-center gap-[7px] bg-[#9bdbda] pl-2 leading-[27px] whitespace-nowrap">
              <input
                type="radio"
                name="mode"
                checked={mode === m}
                onChange={() => setMode(m)}
                className="size-[10px] flex-none rotate-45 appearance-none border-2 border-t-[#c9fbf7] border-r-[#4f8584] border-b-[#4f8584] border-l-[#c9fbf7] checked:border-t-[#666] checked:border-r-[#eee] checked:border-b-[#eee] checked:border-l-[#666] checked:bg-[#c8104c]"
              />
              {m}
            </label>
          ))}
        </div>
        <div className="h-[31px] bg-[#54ceb0]" />
        <div className="mt-px bg-[#54ceb0] p-0.5">
          <button className={`h-6 w-full leading-5 ${raised}`}>Close</button>
        </div>
      </fieldset>
    </section>
  );
}

/* ---------- drill tool manager ---------- */

function Beam() {
  return (
    <svg width="5" height="15" viewBox="0 0 5 15" className="mt-px flex-none" stroke="#222" aria-hidden="true">
      <path d="M2.500 1v13" strokeDasharray="1 1" />
      <path d="M0 .500h1M4 .500h1M0 14.500h1M4 14.500h1" />
    </svg>
  );
}

function Field({ label, value = "", className, beam = true }) {
  return (
    <div className={`flex items-start overflow-hidden pl-px ${className}`}>
      {beam && <Beam />}
      <input aria-label={label} defaultValue={value} className="h-4 w-full min-w-0 bg-transparent leading-4 outline-none" />
    </div>
  );
}

const knobBlue = "border-t-[#d4fbf7] border-r-[#4f8584] border-b-[#4f8584] border-l-[#d4fbf7]";
const knobYellow = "border-[#bcbc96]";

function OptionMenu({ label, value, className, knob = knobBlue }) {
  return (
    <div className={`relative flex items-center ${className}`}>
      <select aria-label={label} className="h-full w-full appearance-none bg-transparent pl-1 outline-none">
        <option>{value}</option>
      </select>
      <span className={`pointer-events-none absolute right-1.5 h-[7px] w-3 border-2 ${knob}`} />
    </div>
  );
}

const TOOLS = [
  { id: "T01", tag: "A", count: 298, slot: "", type: "Via", finish: "254", drill: "250" },
  { id: "T02", tag: "B", count: 1, slot: "2001.52", type: "Plated", finish: "1000.75", drill: "1157" },
  { id: "T03", tag: "C", count: 8, slot: "", type: "Plated", finish: "2499.36", drill: "2625" },
  { id: "T04", tag: "D", count: 1, slot: "2501.9", type: "Plated", finish: "1000.75", drill: "1157", bare: true },
  { id: "T05", tag: "E", count: 1, slot: "1998.98", type: "Plated", finish: "1000.75", drill: "1157", bare: true, active: true },
];

const HEADS = [["Slot", "Len(my)"], ["Type"], ["Finish", "Size(my)"], ["+Tol", "(my)"], ["-Tol", "(my)"], ["Drill", "Size(my)"], ["Drill", "Des"], ["", "S"]];

const cell = "border-r-2 border-b-2 border-black p-0";
const whiteField = "m-0.5 h-[27px] border-2 border-t-[#999] border-l-[#999] border-r-[#ccc] border-b-[#ccc] bg-white";
const yellowField = "m-0.5 h-[27px] border-2 border-t-[#9c9c78] border-l-[#9c9c78] border-r-[#c9c9a0] border-b-[#c9c9a0] bg-[#ffffcc]";

function ToolTable() {
  return (
    <table className="w-full table-fixed border-separate border-spacing-0">
      <colgroup>
        <col className="w-[27px]" />
        <col className="w-[68px]" />
        <col className="w-[60px]" />
        <col className="w-[83px]" />
        <col className="w-[115px]" />
        <col className="w-[83px]" />
        <col className="w-[74px]" />
        <col className="w-[74px]" />
        <col className="w-[83px]" />
        <col className="w-[83px]" />
        <col />
      </colgroup>
      <thead>
        <tr className="h-[36px] bg-[#b3ffff] leading-[15px]">
          <th className="border-y border-r-2 border-l-2 border-black p-0" aria-label="symbol" />
          <th className="border-y border-r-2 border-black p-0">Tool</th>
          <th className="border-y border-r-2 border-black p-0 pl-[3px] text-left">Count</th>
          {HEADS.map((h, i) => (
            <th key={i} className="overflow-hidden border-y border-r-2 border-black p-0 last:border-r-0">
              {h[0]}
              {h[1] && <><br />{h[1]}</>}
            </th>
          ))}
        </tr>
      </thead>
      <tbody>
        <tr className="h-[5px]"><td colSpan={11} className="border-b-2 border-black p-0" /></tr>
        {TOOLS.map((t) => (
          <tr key={t.id} className="h-[33px]">
            <td className={`${cell} border-l-2`}>
              <svg width="20" height="20" viewBox="0 0 20 20" className="mx-auto" aria-label={t.tag}>
                <path d="M.5.500h19v19H.5z" fill="#fff" stroke="#111" />
                <path d="M9.500 4v12M3 10h13" stroke="#111" />
                <text x="14" y="7.500" fontSize="8" fontWeight="normal" fontFamily="Liberation Mono">{t.tag}</text>
              </svg>
            </td>
            <td className={cell}>
              <button className={`mx-0.5 block h-[27px] w-[62px] pl-0.5 text-left ${raisedGreen} ${t.id === "T01" ? "bg-[#ffc44f]" : "bg-[#54ceb0]"}`}>{t.id}</button>
            </td>
            <td className={`${cell} pr-[3px] text-right`}>{t.count}</td>
            <td className={`${cell} bg-white`}><Field label={`${t.id} slot`} value={t.slot} className={whiteField} /></td>
            <td className={`${cell} bg-[#ffffcc]`}>
              <OptionMenu label={`${t.id} type`} value={t.type} knob={knobYellow} className="mr-0.5 ml-1.5 h-[27px] border-2 border-t-[#dcdcb0] border-r-[#9c9c78] border-b-[#9c9c78] border-l-[#dcdcb0]" />
            </td>
            <td className={`${cell} bg-[#ffffcc]`}><Field label={`${t.id} finish`} value={t.finish} className={yellowField} /></td>
            <td className={`${cell} bg-[#ffffcc]`}><Field label={`${t.id} plus`} value="0" className={yellowField} /></td>
            <td className={`${cell} bg-[#ffffcc]`}><Field label={`${t.id} minus`} value="0" className={yellowField} /></td>
            <td className={`${cell} bg-white`}><Field label={`${t.id} drill`} value={t.drill} className={whiteField} /></td>
            <td className={`${cell} ${t.active ? "bg-black" : "bg-white"}`}><Field label={`${t.id} des`} beam={!t.bare} className={whiteField} /></td>
            <td className="border-b-2 border-black p-0" />
          </tr>
        ))}
        <tr className="h-[33px]">
          <td className={`${cell} border-l-2`} />
          <td className={cell}><button className={`mx-0.5 block h-[27px] w-[62px] bg-[#54ceb0] pl-0.5 text-left ${raisedGreen}`}>Total</button></td>
          <td className={`${cell} pr-[3px] text-right`}>309</td>
          {HEADS.map((_, i) => (
            <td key={i} className={`${cell} last:border-r-0`} />
          ))}
        </tr>
      </tbody>
    </table>
  );
}

function IconButton({ label, children }) {
  return (
    <div className="border border-black p-px">
      <button aria-label={label} className={`flex h-full w-[26px] items-center justify-center ${raised}`}>
        <svg width="17" height="17" viewBox="0 0 17 17" fill="none" stroke="#111"><path d="M.5.500h16v16H.5z" />{children}</svg>
      </button>
    </div>
  );
}

function NavButton({ children, className = "" }) {
  return (
    <div className={`border border-black bg-[#54ceb0] p-px ${className}`}>
      <button className={`h-full w-full whitespace-nowrap ${raised}`}>{children}</button>
    </div>
  );
}

function DrillManager() {
  return (
    <section className={`absolute top-[168px] right-[451px] w-[767px] border border-[#333] bg-[#54ceb0] text-[15px] font-bold text-black shadow-[2px_6px_14px_rgba(0,0,0,0.5)] ${MONO_FONT}`}>
      <header className={`flex h-[30px] items-center gap-1.5 bg-white pr-[18px] pl-[7px] font-normal ${UI_FONT}`}>
        <AppIcon />
        <h1 className="flex-1 leading-7">Drill Tool Manager</h1>
        <button aria-label="Minimize" className="mr-[29px]"><svg width="10" height="10" stroke="#111"><path d="M0 5.500h10" /></svg></button>
        <button aria-label="Maximize" className="mr-[29px]"><svg width="10" height="10" fill="none" stroke="#111"><path d="M.5.500h9v9h-9z" /></svg></button>
        <button aria-label="Close window"><svg width="10" height="10" stroke="#111"><path d="M0 0l10 10M10 0L0 10" /></svg></button>
      </header>

      <div className="flex h-[33px] leading-[27px]">
        <div className="w-[166px] border border-black p-0.5">
          <button className={`flex h-full w-full items-center justify-between pr-3 pl-1 ${raised}`}><span>Layer</span><span>:</span></button>
        </div>
        <div className="w-[111px] border border-black bg-[#9bdbda] p-0.5"><Field label="Layer" value="drl" className={`h-full ${sunken}`} /></div>
        <div className="ml-auto flex items-center border border-black bg-[#9bdbda] pl-2">
          Slots:
          <OptionMenu label="Slots" value="By length" className={`mr-0.5 ml-1.5 h-[27px] w-[114px] ${raised}`} />
        </div>
        <div className="w-[151px]" />
      </div>

      <div className="flex h-[29px]">
        <div className="flex w-[308px] items-center border border-black bg-[#9bdbda] pl-px">
          <label htmlFor="thickness" className="w-[167px]">Board Thickness :</label>
          <div className={`flex h-[23px] w-[104px] items-start pl-1 ${sunken}`}>
            <Beam />
            <input id="thickness" defaultValue="1600" className="h-4 w-full min-w-0 leading-4 outline-none" />
          </div>
          <span className="ml-[3px]">my</span>
        </div>
        <div className="w-[174px] border border-black p-0.5"><button className={`h-full w-full whitespace-nowrap ${raised} leading-4`}>User Parameters :</button></div>
        <div className="ml-auto w-[127px] border border-black bg-[#9bdbda] p-0.5"><Field label="User parameters" value="hasl" className={`h-full ${sunken}`} /></div>
        <div className="w-[151px]" />
      </div>

      <div className="mx-0.5 h-[397px] overflow-hidden border-2 border-t-[#2d7462] border-r-[#a5efdc] border-b-[#a5efdc] border-l-[#2d7462] pl-px">
        <ToolTable />
      </div>

      <div className="mx-0.5 mt-1 flex h-[15px] items-center border-y border-t-[#2d7462] border-b-[#a5efdc] bg-[#46ab93]">
        <svg width="14" height="13" viewBox="0 0 14 13"><path d="M13 0v13L0 6.500z" fill="#54ceb0" stroke="#2d7462" /><path d="M13 0L0 6.500" stroke="#a5efdc" /></svg>
        <div className={`h-full w-[669px] bg-[#54ceb0] ${raisedGreen}`} />
        <svg width="14" height="13" viewBox="0 0 14 13" className="ml-auto"><path d="M1 0v13l12-6.500z" fill="#54ceb0" stroke="#a5efdc" /><path d="M1 13l12-6.500" stroke="#2d7462" /></svg>
      </div>

      <div className="mt-[5px] flex h-[34px] border-y border-black leading-4">
        <div className="mr-0.5 flex w-[42px] items-center border border-black bg-[#ffc44f] pl-1 text-[12px]">T01</div>
        <NavButton className="w-[60px]">First</NavButton>
        <NavButton className="w-[35px]">&lt;--</NavButton>
        <NavButton className="w-[35px]">--&gt;</NavButton>
        <NavButton className="w-[48px]">Last</NavButton>
        <label htmlFor="index" className="ml-0.5 flex items-center font-normal">Index:</label>
        <div className="m-0.5 mr-1 ml-1 flex w-[59px] items-start border-2 border-t-[#2d7462] border-r-[#a5efdc] border-b-[#a5efdc] border-l-[#2d7462] pl-0.5">
          <Beam />
          <input id="index" className="h-4 w-full min-w-0 outline-none" />
        </div>
        <IconButton label="Highlight"><path d="M8.500 3a3.500 3.500 0 0 1 2 6v3h-4V9a3.500 3.500 0 0 1 2-6zM7 14h3" /></IconButton>
        <IconButton label="Snap"><path d="M4 3h8l-3 2-3 2 6 3v3M4 14l2-2 2 2 2-2" /></IconButton>
        <IconButton label="Clear highlight"><path d="M8.500 3a3.500 3.500 0 0 1 2 6v3h-4V9a3.500 3.500 0 0 1 2-6zM7 14h3" /><path d="M2 2l13 13M15 2L2 15" stroke="#d01010" strokeWidth="1.800" /></IconButton>
        <div className="ml-auto flex items-center border border-black bg-[#9bdbda]"><OptionMenu label="Units" value="ml/my" className={`ml-1.5 h-7 w-[80px] ${raised}`} /></div>
        <div className="flex items-center border border-black bg-[#9bdbda]"><OptionMenu label="Mode" value="Regular" className={`ml-1.5 h-7 w-[106px] ${raised}`} /></div>
      </div>

      <div className="mt-[5px] flex h-[34px] border-y border-black leading-4">
        <div className="flex-1" />
        <NavButton className="w-[131px]">Combine Tools</NavButton>
        <div className="flex items-center border border-black bg-[#9bdbda]">
          <span className="mr-[18px] ml-2.5">Merge Tools :</span>
          <OptionMenu label="Merge tools" value="Update Tools Numbers" className={`h-[29px] w-[213px] ${raised}`} />
          <button className={`mx-0.5 h-[29px] w-[55px] ${raised}`}>Merge</button>
        </div>
      </div>

      <div className="grid h-[29px] grid-cols-4 leading-4">
        <NavButton>Apply</NavButton>
        <NavButton>Calc Drills</NavButton>
        <NavButton>Update Table</NavButton>
        <NavButton>Close</NavButton>
      </div>
    </section>
  );
}

export default function App() {
  return (
    <div className="relative flex h-screen overflow-hidden bg-black">
      <LayerStrip />
      <Spreadsheet />
      <div className="w-[428px] flex-none" />
      <CadPanel />

      {/* cell comment and its connectors */}
      <div className="absolute top-[231px] left-[797px] w-[120px] border border-black bg-[#ffffe1] px-0.5 text-[13px] leading-4 whitespace-nowrap font-['Noto_Sans_CJK_SC',sans-serif]">
        <b className="font-['Liberation_Mono',monospace]">cuisl:</b><br />所有<br />（不
      </div>
      <span className="absolute top-[284px] left-[800px] text-[13px] text-[#f00] line-through font-['Noto_Sans_CJK_SC',sans-serif]">非塞孔</span>
      <svg className="absolute top-[220px] left-[680px]" width="150" height="115" stroke="#111" aria-hidden="true">
        <path d="M4 8l113 3M4 110L145 73" />
        <path d="M3 8l9-3v7zM3 110l8-6 2 6z" fill="#111" />
      </svg>

      <div className="absolute top-[703px] left-[444px] h-[74px] w-[256px] border-4 border-[#ffff20] shadow-[2px_3px_4px_rgba(0,0,0,0.5),inset_2px_3px_4px_rgba(0,0,0,0.4)]" />

      <DrillManager />
      <MeasurePopup />

      <div className="absolute top-[395px] left-[843px] h-[43px] w-[664px] border-4 border-[#ffff20] shadow-[2px_3px_4px_rgba(0,0,0,0.5),inset_2px_3px_4px_rgba(0,0,0,0.4)]" />
      <svg className="absolute top-[365px] left-[895px]" width="72" height="44" fill="#f00" aria-label="arrow">
        <path d="M7 5l33 18" stroke="#f00" strokeWidth="4" strokeLinecap="round" />
        <path d="M44 18L67 40 33 32z" />
      </svg>
    </div>
  );
}
